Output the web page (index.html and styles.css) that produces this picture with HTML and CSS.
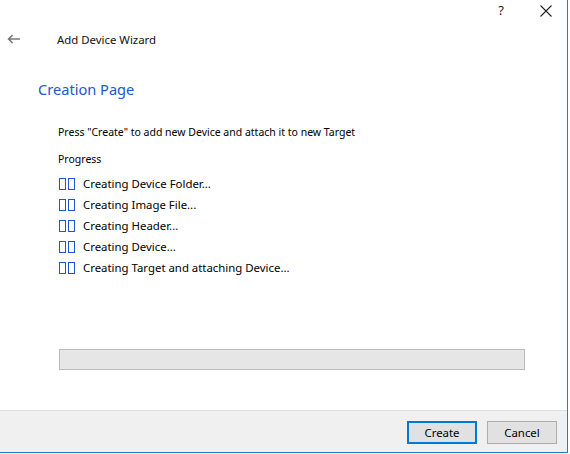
FILE: index.html
```html
<!DOCTYPE html>
<html>
<head>
<meta charset="utf-8">
<link rel="stylesheet" href="styles.css">
</head>
<body>
<div class="window">
  <div class="titlebar">
    <span class="help">?</span>
    <span class="close">
      <svg width="12" height="12" viewBox="0 0 12 12"><path d="M0.5 0.5 L11.5 11.5 M11.5 0.5 L0.5 11.5" stroke="#222" stroke-width="1.1" fill="none"/></svg>
    </span>
  </div>
  <div class="header">
    <span class="back">
      <svg width="13" height="10" viewBox="0 0 13 10"><path d="M13 5 H1.8 M5.6 1 L1.6 5 L5.6 9" stroke="#7a7a7a" stroke-width="1.7" fill="none"/></svg>
    </span>
    <span class="wiz-title">Add Device Wizard</span>
  </div>
  <div class="content">
    <h1 class="page-title">Creation Page</h1>
    <div class="inner">
      <p class="instr">Press "Create" to add new Device and attach it to new Target</p>
      <p class="progress-label">Progress</p>
      <ul class="steps">
        <li><span class="tofu"><i></i><i></i></span>Creating Device Folder...</li>
        <li><span class="tofu"><i></i><i></i></span>Creating Image File...</li>
        <li><span class="tofu"><i></i><i></i></span>Creating Header...</li>
        <li><span class="tofu"><i></i><i></i></span>Creating Device...</li>
        <li><span class="tofu"><i></i><i></i></span>Creating Target and attaching Device...</li>
      </ul>
      <div class="progressbar"></div>
    </div>
  </div>
  <div class="footer">
    <button class="btn default">Create</button>
    <button class="btn">Cancel</button>
  </div>
</div>
</body>
</html>
```
FILE: styles.css
```css
html, body {
  margin: 0;
  padding: 0;
  background: #fff;
}
body {
  width: 570px;
  height: 454px;
  overflow: hidden;
  font-family: "Noto Sans", "Open Sans", sans-serif;
  font-size: 10.5px;
  color: #000;
}
.window {
  width: 568px;
  height: 453px;
  box-sizing: border-box;
  border-right: 1px solid #1a7fd0;
  border-bottom: 1px solid #1a7fd0;
  display: flex;
  flex-direction: column;
  background: #fff;
}
.titlebar {
  height: 29px;
  display: flex;
  justify-content: flex-end;
  align-items: center;
  flex-shrink: 0;
}
.help {
  font-size: 13px;
  color: #222;
  width: 46px;
  text-align: center;
  margin-top: -10px;
  margin-right: -1px;
}
.close {
  width: 46px;
  height: 20px;
  display: flex;
  align-items: center;
  justify-content: center;
  margin-right: -2px;
  margin-top: -7px;
}
.header {
  height: 20px;
  display: flex;
  align-items: center;
  flex-shrink: 0;
}
.back {
  width: 57px;
  padding-left: 7px;
  box-sizing: border-box;
  display: flex;
  align-items: center;
}
.wiz-title {
  font-size: 11.4px;
  color: #111;
}
.content {
  flex: 1;
  padding-left: 38px;
  padding-top: 30px;
}
.page-title {
  margin: 0;
  font-weight: normal;
  font-size: 14.6px;
  line-height: 20px;
  color: #2454cf;
}
.inner {
  padding-left: 20px;
  padding-top: 25px;
}
.instr {
  margin: 0;
  line-height: 16px;
}
.progress-label {
  margin: 11px 0 0;
  line-height: 16px;
}
.steps {
  list-style: none;
  margin: 6px 0 0;
  padding: 0;
}
.steps li {
  height: 21px;
  line-height: 21px;
  display: flex;
  align-items: center;
  font-size: 11.4px;
}
.tofu {
  display: inline-flex;
  gap: 2px;
  width: 24px;
  margin-left: 1px;
}
.tofu i {
  display: block;
  width: 5px;
  height: 10px;
  border: 1px solid #1f55d0;
}
.progressbar {
  margin-top: 71px;
  width: 464px;
  height: 19px;
  margin-left: 1px;
  background: #e6e6e6;
  border: 1px solid #bcbcbc;
}
.footer {
  height: 40px;
  flex-shrink: 0;
  background: #f0f0f0;
  border-top: 1px solid #dfdfdf;
  display: flex;
  justify-content: flex-end;
  align-items: center;
  gap: 10px;
  padding-right: 10px;
  padding-top: 1px;
}
.btn {
  width: 70px;
  height: 23px;
  font-family: inherit;
  font-size: 11.4px;
  color: #000;
  background: #e1e1e1;
  border: 1px solid #adadad;
  padding: 0;
  margin: 0;
}
.btn.default {
  border: 2px solid #0078d7;
}
```
